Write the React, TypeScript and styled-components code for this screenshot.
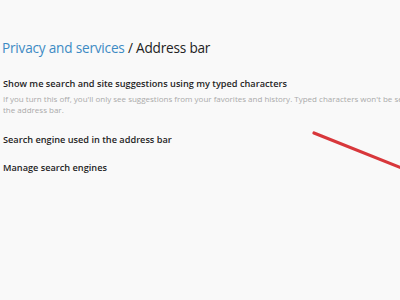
import React from "react";
import styled, { createGlobalStyle } from "styled-components";

const GlobalStyle = createGlobalStyle`
  html, body {
    margin: 0;
    padding: 0;
    background: #f9f9f9;
  }
  body {
    font-family: "Open Sans", "Noto Sans", sans-serif;
    overflow: hidden;
  }
`;

const Page = styled.div`
  position: relative;
  width: 400px;
  height: 300px;
  overflow: hidden;
  padding: 38px 0 0 2px;
  box-sizing: border-box;
`;

const Heading = styled.h1`
  margin: 0 0 20px;
  font-size: 13.6px;
  font-weight: 400;
  color: #222;
  white-space: nowrap;
  letter-spacing: -0.2px;
`;

const Crumb = styled.span`
  color: #3d8bc4;
`;

const Setting = styled.div`
  margin-left: 1px;
  margin-bottom: ${(p: { $gap?: number }) => p.$gap ?? 14}px;
`;

const Title = styled.div`
  font-size: 9.2px;
  font-weight: 600;
  color: #1f1f1f;
  white-space: nowrap;
  line-height: 14px;
`;

const Desc = styled.div`
  font-size: 8px;
  color: #aaa;
  white-space: nowrap;
  overflow: hidden;
  width: 398px;
  line-height: 11px;
  margin-top: 2px;
`;

const Arrow = styled.svg`
  position: absolute;
  left: 0;
  top: 0;
  pointer-events: none;
`;

export default function App() {
  return (
    <>
      <GlobalStyle />
      <Page>
        <Heading>
          <Crumb>Privacy and services</Crumb> / Address bar
        </Heading>
        <Setting $gap={18}>
          <Title>Show me search and site suggestions using my typed characters</Title>
          <Desc>
            If you turn this off, you'll only see suggestions from your favorites and history. Typed characters won't be seen in
            <br />
            the address bar.
          </Desc>
        </Setting>
        <Setting $gap={14}>
          <Title>Search engine used in the address bar</Title>
        </Setting>
        <Setting>
          <Title>Manage search engines</Title>
        </Setting>
        <Arrow width="400" height="300" viewBox="0 0 400 300">
          <line x1="314" y1="133" x2="404" y2="169" stroke="#d8373b" strokeWidth="3.2" strokeLinecap="round" />
        </Arrow>
      </Page>
    </>
  );
}
